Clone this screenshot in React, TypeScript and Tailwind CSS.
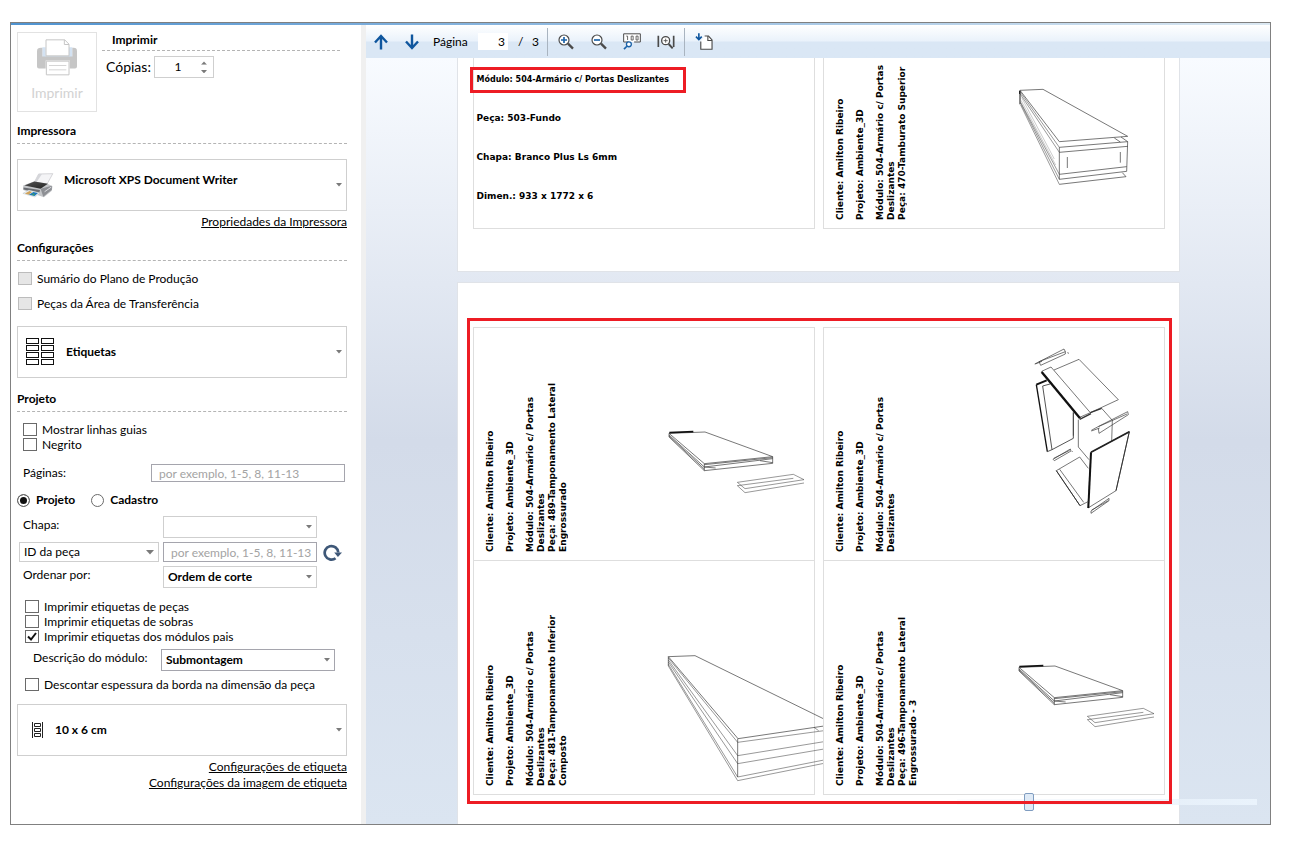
import React from "react"
import type { ReactNode } from "react"
import clsx from "clsx"

const Caret = ({ className }: { className?: string }) => (
  <svg
    viewBox="0 0 8 5"
    className={clsx("pointer-events-none shrink-0 fill-[#7a7a7a]", className)}
  >
    <path d="M0 0h8L4 4.5z" />
  </svg>
)

const SectionTitle = ({ children }: { children: ReactNode }) => (
  <h2 className="border-b border-dashed border-[#b4b4b4] pb-1 font-bold leading-4">
    {children}
  </h2>
)

type CheckProps = {
  label: string
  checked?: boolean
  disabled?: boolean
}

const Check = ({ label, checked, disabled }: CheckProps) => (
  <label className="flex h-[15px] items-center gap-[5px] whitespace-nowrap">
    <span className="relative h-[13px] w-[14px] shrink-0">
      <input
        type="checkbox"
        defaultChecked={checked}
        disabled={disabled}
        className="peer block h-[13px] w-[14px] appearance-none border border-[#6a6a6a] bg-white disabled:border-[#bcbcbc] disabled:bg-[#e6e6e6]"
      />
      <svg
        viewBox="0 0 14 13"
        className="pointer-events-none absolute inset-0 hidden peer-checked:block"
      >
        <path d="M3 6.5l3 3 5-6.5" fill="none" stroke="#111" strokeWidth="2" />
      </svg>
    </span>
    {label}
  </label>
)

type DropProps = {
  label: string
  value: string
  className?: string
  bold?: boolean
  wide?: boolean
}

const Drop = ({ label, value, className, bold, wide }: DropProps) => (
  <span className={clsx("flex items-center border bg-white pr-1", className)}>
    <select
      aria-label={label}
      className={clsx(
        "h-full min-w-0 flex-1 appearance-none bg-transparent pl-1 outline-none",
        bold && "font-bold"
      )}
    >
      <option>{value}</option>
    </select>
    <Caret className={wide ? "w-2" : "w-[6px]"} />
  </span>
)

type BigDropProps = {
  label: string
  value: string
  icon: ReactNode
  className: string
}

const BigDrop = ({ label, value, icon, className }: BigDropProps) => (
  <div className="flex h-[52px] items-center border border-[#cfcfcf] bg-white pr-1">
    {icon}
    <select
      aria-label={label}
      className={clsx(
        "h-full min-w-0 flex-1 appearance-none bg-transparent font-bold outline-none",
        className
      )}
    >
      <option>{value}</option>
    </select>
    <Caret className="w-[6px]" />
  </div>
)

const PrintIcon = () => (
  <svg viewBox="0 0 120 110" className="h-[37px] w-10">
    <path d="M16 24h10V50h70V24h10v30H16z" fill="#d3e2f2" />
    <path d="M0 36Q0 26 12 26h4v26h90V26h4q10 0 10 10v46q0 6-6 6H98V64H26v24H6q-6 0-6-6z" fill="#c6c6c6" />
    <path d="M27 2h56l13 13v35H27z" fill="#fff" stroke="#c6c6c6" strokeWidth="3" />
    <path d="M82 2v14h14" fill="none" stroke="#c6c6c6" strokeWidth="3" />
    <path d="M28 66h68v41H28z" fill="#fff" stroke="#c6c6c6" strokeWidth="3" />
    <path d="M36 79h52M36 92h52" stroke="#d5d5d5" strokeWidth="3" />
  </svg>
)

const DeviceIcon = () => (
  <svg viewBox="0 0 96 76" className="ml-1 h-[25px] w-8 shrink-0">
    <defs>
      <linearGradient id="tray" x1="0" y1="0" x2="1" y2="1">
        <stop offset="0" stopColor="#555" />
        <stop offset="1" stopColor="#222" />
      </linearGradient>
    </defs>
    <path d="M50 3l43-1-17 31-39-5z" fill="#f4f4f6" stroke="#c2c2c6" strokeWidth="2" />
    <path d="M50 3l10 0-16 24-7 1z" fill="#d5d6da" />
    <path d="M3 38l32-12 45 8 12 6-2 14-24 20-22-8L3 52z" fill="#c4c6c9" />
    <path d="M7 38l30-12 41 7-22 15z" fill="url(#tray)" />
    <path d="M56 48l34-9v12L64 72z" fill="#8d8f94" />
    <path d="M68 57l20-14" stroke="#d9dade" strokeWidth="3" />
    <path d="M4 44l50 8-2 8-48-10z" fill="#6a6d72" />
    <path d="M2 62l18-10 34 8-15 13z" fill="#eef3f8" stroke="#9aa" strokeWidth="1" />
    <path d="M8 62l14-7 8 3-10 8z" fill="#d0a35c" />
    <path d="M20 66l14-8 14 3-10 9z" fill="#1f78b8" />
    <path d="M30 62l9 2-6 5z" fill="#3fa35a" />
  </svg>
)

const LabelsIcon = () => (
  <svg viewBox="0 0 29 28" className="ml-2 h-7 w-[29px] shrink-0" fill="none" stroke="#111">
    {[0, 7, 14, 21].map((y) => (
      <g key={y}>
        <rect x="0.5" y={y + 0.5} width="12" height="5" />
        <rect x="15.5" y={y + 0.5} width="12" height="5" />
      </g>
    ))}
  </svg>
)

const RollIcon = () => (
  <svg viewBox="0 0 11 16" className="ml-[14px] h-4 w-[11px] shrink-0" fill="none" stroke="#222">
    <path d="M0.5 0v16M10.5 0v16" />
    <path d="M2.5 1.5h6v3h-6zM2.5 6.5h6v3h-6zM2.5 11.5h6v3h-6z" />
  </svg>
)

const RefreshIcon = () => (
  <svg viewBox="0 0 56 50" className="h-[17px] w-[19px]">
    <path d="M37 42A20 20 0 1 1 45 25" fill="none" stroke="#3f5878" strokeWidth="8" />
    <path d="M33 25h23L44 38z" fill="#3f5878" />
  </svg>
)

const Lens = ({ sign }: { sign: string }) => (
  <svg viewBox="0 0 48 48" className="size-4" fill="none">
    <path d="M30 29l15 15" stroke="#4a4a4a" strokeWidth="7" />
    <circle cx="18" cy="18" r="15" stroke="#4a4a4a" strokeWidth="3.5" fill="#fff" />
    <path d={sign} stroke="#1b62a8" strokeWidth="5" />
  </svg>
)

const ToolButton = ({ name, className, children }: { name: string; className?: string; children: ReactNode }) => (
  <button type="button" aria-label={name} className={clsx("shrink-0", className)}>
    {children}
  </button>
)

const Toolbar = () => (
  <div className="flex h-[33px] shrink-0 items-center bg-linear-to-b from-white via-[#eaf2fb] via-48% to-[#dae7f5] to-52% pl-2">
    <ToolButton name="Página anterior">
      <svg viewBox="0 0 14 16" className="h-4 w-[14px]" fill="none" stroke="#0f569e" strokeWidth="2.4">
        <path d="M7 15.5V2.5M1 8.5l6-6.5 6 6.5" />
      </svg>
    </ToolButton>
    <ToolButton name="Próxima página" className="ml-[17px]">
      <svg viewBox="0 0 14 16" className="h-4 w-[14px]" fill="none" stroke="#0f569e" strokeWidth="2.4">
        <path d="M7 0.5V13.5M1 7.5l6 6.500 6-6.500" />
      </svg>
    </ToolButton>
    <label className="ml-[14px] flex items-center">
      <span className="w-[45px]">Página</span>
      <input defaultValue="3" className="h-[17px] w-[30px] bg-white pr-[3px] text-right outline-none" />
    </label>
    <span className="ml-[10px] w-[14px]">/</span>
    <span className="w-[15px]">3</span>
    <span className="h-7 w-px bg-[#a9b4c0]" />
    <ToolButton name="Aumentar" className="ml-[10px]">
      <Lens sign="M9 18h18M18 9v18" />
    </ToolButton>
    <ToolButton name="Diminuir" className="ml-[17px]">
      <Lens sign="M9 18h18" />
    </ToolButton>
    <ToolButton name="Tamanho real" className="ml-4">
      <svg viewBox="0 0 55 51" className="h-[17px] w-[18px]" fill="none">
        <path d="M18 27H2V2h51v25H34" stroke="#4a4a4a" strokeWidth="3" fill="#fff" />
        <path d="M10 9h4v12M25 9h6v12h-6zM40 9h6v12h-6z" stroke="#4a4a4a" strokeWidth="2.5" />
        <circle cx="18" cy="34" r="7.5" fill="#fff" stroke="#1b62a8" strokeWidth="4" />
        <path d="M12 40L3 49" stroke="#1b62a8" strokeWidth="5" />
      </svg>
    </ToolButton>
    <ToolButton name="Ajustar à largura" className="ml-4">
      <svg viewBox="0 0 52 42" className="h-[14px] w-[18px]" fill="none" stroke="#4a4a4a">
        <path d="M3 2v34M49 2v34" strokeWidth="5" />
        <circle cx="25" cy="17" r="12" strokeWidth="4" fill="#fff" />
        <path d="M25 11v12M19 17h12" strokeWidth="2.5" />
        <path d="M34 27l12 13" strokeWidth="6" />
      </svg>
    </ToolButton>
    <span className="ml-[9px] h-7 w-px bg-[#a9b4c0]" />
    <ToolButton name="Exportar" className="ml-[10px]">
      <svg viewBox="0 0 56 52" className="h-[17px] w-[18px]" fill="none">
        <path d="M18 26v24h35V21L42 9H30" fill="#fff" stroke="#4a4a4a" strokeWidth="3.5" />
        <path d="M40 9v14h13" stroke="#4a4a4a" strokeWidth="3.5" />
        <path d="M12 0v20M3 11l9 9 9-9" stroke="#0f569e" strokeWidth="5" />
      </svg>
    </ToolButton>
  </div>
)

const Sidebar = () => (
  <aside className="flex w-[350px] shrink-0 flex-col bg-white pl-[6px] pr-[14px] pt-[7px]">
    <div className="flex">
      <button
        type="button"
        disabled
        className="flex size-20 flex-col items-center gap-1 border border-[#e2e2e2] pt-[6px] text-sm leading-[26px] text-[#d2d2d2]"
      >
        <PrintIcon />
        Imprimir
      </button>
      <div className="ml-[5px] mr-[7px] flex-1">
        <h2 className="border-b border-dashed border-[#b4b4b4] pb-[2px] pl-[10px] font-bold leading-4">
          Imprimir
        </h2>
        <label className="mt-[5px] flex h-[22px] items-center pl-1 text-sm">
          <span className="w-12">Cópias:</span>
          <span className="flex h-full w-[60px] items-center border border-[#cfcfcf]">
            <input defaultValue="1" className="w-[46px] text-center text-xs outline-none" />
            <span className="flex flex-col gap-[5px]">
              <button type="button" aria-label="Mais cópias">
                <Caret className="w-[6px] rotate-180" />
              </button>
              <button type="button" aria-label="Menos cópias">
                <Caret className="w-[6px]" />
              </button>
            </span>
          </span>
        </label>
      </div>
    </div>

    <div className="mt-[11px]">
      <SectionTitle>Impressora</SectionTitle>
    </div>
    <div className="mt-[15px]">
      <BigDrop
        label="Impressora"
        value="Microsoft XPS Document Writer"
        icon={<DeviceIcon />}
        className="pb-[10px] pl-[10px]"
      />
    </div>
    <a href="#propriedades" className="mt-[3px] self-end leading-4 underline">
      Propriedades da Impressora
    </a>

    <div className="mt-[10px]">
      <SectionTitle>Configurações</SectionTitle>
    </div>
    <div className="mt-[10px] flex flex-col gap-[10px] pl-px">
      <Check label="Sumário do Plano de Produção" disabled />
      <Check label="Peças da Área de Transferência" disabled />
    </div>
    <div className="mt-[15px]">
      <BigDrop label="Tipo" value="Etiquetas" icon={<LabelsIcon />} className="pl-[11px]" />
    </div>

    <div className="mt-[13px]">
      <SectionTitle>Projeto</SectionTitle>
    </div>
    <div className="mt-[10px] flex flex-col pl-[6px]">
      <Check label="Mostrar linhas guias" />
      <Check label="Negrito" />
    </div>
    <label className="mt-3 flex h-[18px] items-center justify-between pl-[6px] pr-[2px]">
      Páginas:
      <input
        placeholder="por exemplo, 1-5, 8, 11-13"
        className="h-[18px] w-[194px] border border-[#a5a5ad] pl-[7px] outline-none placeholder:text-[#a3a3a3]"
      />
    </label>
    <div className="mt-[10px] flex h-4 items-center gap-4 font-bold">
      {["Projeto", "Cadastro"].map((name) => (
        <label key={name} className="flex items-center gap-[6px]">
          <input
            type="radio"
            name="origem"
            defaultChecked={name === "Projeto"}
            className="size-[13px] appearance-none rounded-full border border-[#6a6a6a] bg-white checked:bg-[#111] checked:shadow-[inset_0_0_0_2px_white]"
          />
          {name}
        </label>
      ))}
    </div>

    <div className="mt-2 grid grid-cols-[142px_154px_auto] gap-x-1 gap-y-1">
      <span className="h-[22px] pl-[6px] leading-[18px]">Chapa:</span>
      <Drop label="Chapa" value="" className="h-[22px] border-[#cfcfcf]" />
      <span />
      <Drop label="Campo" value="ID da peça" wide className="ml-[2px] h-5 border-[#cfcfcf]" />
      <input
        aria-label="ID da peça"
        placeholder="por exemplo, 1-5, 8, 11-13"
        className="h-5 w-full min-w-0 border border-[#a5a5ad] pl-[7px] outline-none placeholder:text-[#a3a3a3]"
      />
      <button type="button" aria-label="Atualizar" className="ml-[2px] self-center">
        <RefreshIcon />
      </button>
      <span className="h-[22px] pl-[6px] leading-[18px]">Ordenar por:</span>
      <Drop label="Ordenar por" value="Ordem de corte" bold className="h-[22px] border-[#cfcfcf]" />
    </div>

    <div className="mt-[11px] flex flex-col pl-2">
      <Check label="Imprimir etiquetas de peças" />
      <Check label="Imprimir etiquetas de sobras" />
      <Check label="Imprimir etiquetas dos módulos pais" checked />
    </div>
    <div className="mt-[5px] flex justify-between pl-4 pr-3">
      <span className="leading-[18px]">Descrição do módulo:</span>
      <Drop label="Descrição do módulo" value="Submontagem" bold className="h-[22px] w-[174px] border-[#a5a5ad]" />
    </div>
    <div className="mt-[6px] pl-2">
      <Check label="Descontar espessura da borda na dimensão da peça" />
    </div>
    <div className="mt-3">
      <BigDrop label="Tamanho" value="10 x 6 cm" icon={<RollIcon />} className="pl-3" />
    </div>
    <a href="#etiqueta" className="mt-[3px] self-end leading-4 underline">
      Configurações de etiqueta
    </a>
    <a href="#imagem" className="self-end leading-4 underline">
      Configurações da imagem de etiqueta
    </a>
  </aside>
)

const Drawing = ({ box, children }: { box: string; children: ReactNode }) => (
  <svg
    viewBox={box}
    className="pointer-events-none absolute inset-0 size-full overflow-visible"
    fill="none"
    stroke="#333"
    strokeWidth="2"
  >
    {children}
  </svg>
)

const Panel = () => (
  <>
    <path d="M627 370L735 366L938 440L733 461Z" />
    <path d="M628 368L700 365" stroke="#111" strokeWidth="5" />
    <path d="M627 370v11L733 482L938 460V440M733 461v21M627 375L733 471L938 446M733 464L938 443" />
    <path d="M627 378L733 477M733 471l34 3M900 452l38 6" />
    <path d="M832 517L1000 493L1032 509L855 536ZM832 527L855 548L1032 519M832 527L1000 505" strokeWidth="1.5" />
  </>
)

const Stack = () => (
  <>
    <path d="M1092 507L705 317L625 320L834 566L1092 528" />
    <path d="M625 320v28M833 566v115" />
    <path d="M625 324L833 577L1092 542M625 330L833 617L1092 575M625 336L833 641L1092 597M625 343L833 681L1092 630M625 348L833 692L1092 640M1062 532l14 10" strokeWidth="1.5" />
  </>
)

const Beam = () => (
  <>
    <path d="M615 226L684 223L938 364L733 380Z" />
    <path d="M615 228v40M614 227v10" stroke="#111" strokeWidth="3" />
    <path d="M733 397L938 380L918 366M733 412L938 394M733 478L935 455M733 493L935 469M733 508L933 485L922 473M733 397v96M938 380l-3 89M898 369l18 12M757 426v33M916 411v32" />
    <path d="M615 230L733 397M615 236L733 412M617 262L733 478M617 265L733 493M617 270L733 508" strokeWidth="1.5" />
    <path d="M620 248L718 432M618 256L722 450" stroke="#999" strokeWidth="1.5" />
  </>
)

const Cabinet = () => (
  <>
    <path d="M659 147l16-8 72-37 4 8M672 140l79-30v7l-74 34zM661 147l20-8M757 113l5 2" />
    <path d="M680 169l28-13 118 137-32 14z" fill="#fff" />
    <path d="M717 165l75-32 118 121-84 39" />
    <path d="M680 171L795 310" stroke="#111" strokeWidth="7" />
    <path d="M794 313l34-17M826 293l34-13" strokeWidth="4" />
    <path d="M664 209L697 410" stroke="#111" strokeWidth="4" />
    <path d="M664 209l31-13" stroke="#111" strokeWidth="6" />
    <path d="M683 213L711 404L775 370V292M697 410l14-6M683 213l22-6" strokeWidth="2.5" />
    <path d="M790 314v82l32 38M860 280l32 36-2 64M775 292v70" />
    <path d="M829 346l22-12 87-44 2 9-88 56-2-15M829 348l25-9M850 335l86-38" />
    <path d="M828 412L943 350L903 527L819 579Z" />
    <path d="M828 412L820 579" stroke="#111" strokeWidth="6" />
    <path d="M828 412L943 350" stroke="#222" strokeWidth="5" />
    <path d="M943 350L903 527" strokeWidth="3" />
    <path d="M714 433l52-31 2 6-50 29zM716 430l48-24M771 408l1 3" />
    <path d="M724 467l70-41 26 34M724 467l71 105 26-13M734 463l72 99" />
    <path d="M724 467l71 105" strokeWidth="3" />
    <path d="M828 588l54-38v7l-54 38zM830 585l50-28" />
  </>
)

type TagProps = {
  lines: string[][]
  box: string
  drawing: ReactNode
  className: string
}

// Rotated label: the text reads from the bottom up
const Tag = ({ lines, box, drawing, className }: TagProps) => (
  <div className={clsx("relative flex items-end border-[#dedede] bg-white pb-2 pl-[11px]", className)}>
    <div className="flex rotate-180 flex-col whitespace-nowrap text-[9px] font-bold leading-[11px] [writing-mode:vertical-rl]">
      {lines.map((group) => (
        <p key={group[0]} className="ml-[9px] last:ml-0">
          {group.map((line) => (
            <span key={line} className="block">
              {line}
            </span>
          ))}
        </p>
      ))}
    </div>
    <Drawing box={box}>{drawing}</Drawing>
  </div>
)

const tagLines = (...part: string[]) => [
  ["Cliente: Amilton Ribeiro"],
  ["Projeto: Ambiente_3D"],
  ["Módulo: 504-Armário c/ Portas", "Deslizantes", ...part],
]

const Preview = () => (
  <main className="relative min-h-0 flex-1 overflow-hidden bg-linear-to-b from-[#f8fbff] via-[#d3dbe9] via-50% to-[#dbe5f1]">
    <div className="mx-auto w-full max-w-[723px] font-['DejaVu_Sans',Verdana,sans-serif] text-black">
      <section className="grid grid-cols-2 gap-x-2 border-x border-b border-[#e0e3e8] bg-white pb-[42px] pl-[15px] pr-[14px]">
        <div className="border-x border-b border-[#dedede] pl-[3px] text-[9px] font-bold leading-[11px]">
          <p className="-ml-[7px] mt-[9px] w-[216px] border-[3px] border-[#ed1c24] py-[5px] pl-[4px] text-[8px] leading-[10px]">
            Módulo: 504-Armário c/ Portas Deslizantes
          </p>
          <p className="mt-5">Peça: 503-Fundo</p>
          <p className="mt-7">Chapa: Branco Plus Ls 6mm</p>
          <p className="mt-7">Dimen.: 933 x 1772 x 6</p>
        </div>
        <Tag
          lines={tagLines("Peça: 470-Tamburato Superior")}
          box="27 129 1020 510"
          drawing={<Beam />}
          className="h-[171px] border-x border-b"
        />
      </section>

      <section className="mt-[10px] border border-[#e0e3e8] bg-white pb-20 pl-[15px] pr-[14px] pt-11">
        <div className="relative grid grid-cols-2 gap-x-2">
          <Tag
            lines={tagLines("Peça: 489-Tamponamento Lateral", "Engrossurado")}
            box="42 54 1020 696"
            drawing={<Panel />}
            className="h-[234px] border"
          />
          <Tag lines={tagLines()} box="27 39 1020 696" drawing={<Cabinet />} className="h-[234px] border" />
          <Tag
            lines={tagLines("Peça: 481-Tamponamento Inferior", "Composto")}
            box="42 33 1020 699"
            drawing={<Stack />}
            className="h-[234px] border-x border-b"
          />
          <Tag
            lines={tagLines("Peça: 496-Tamponamento Lateral", "Engrossurado - 3")}
            box="42 51 1020 699"
            drawing={<Panel />}
            className="h-[234px] border-x border-b"
          />
          <div className="pointer-events-none absolute -bottom-[9px] -left-[6px] -right-[7px] -top-[9px] z-20 border-[3px] border-[#ed1c24]" />
        </div>
      </section>
    </div>
    <input
      type="range"
      aria-label="Zoom"
      min={0}
      max={100}
      defaultValue={23}
      className="absolute bottom-[13px] right-[13px] z-10 h-[18px] w-[300px] appearance-none bg-transparent [&::-webkit-slider-runnable-track]:h-[6px] [&::-webkit-slider-runnable-track]:bg-linear-to-r [&::-webkit-slider-runnable-track]:from-[#e9f0f9]/20 [&::-webkit-slider-runnable-track]:to-[#eaf3fc] [&::-webkit-slider-thumb]:-mt-[6px] [&::-webkit-slider-thumb]:h-[18px] [&::-webkit-slider-thumb]:w-[10px] [&::-webkit-slider-thumb]:appearance-none [&::-webkit-slider-thumb]:rounded-xs [&::-webkit-slider-thumb]:border [&::-webkit-slider-thumb]:border-[#7f9cc0] [&::-webkit-slider-thumb]:bg-[#dfeaf6]"
    />
  </main>
)

export default function App() {
  return (
    <div className="flex h-screen min-h-[842px] bg-white pb-[17px] pl-[10px] pr-5 pt-[22px] font-[Lato,'Open_Sans',sans-serif] text-xs text-black">
      <div className="flex min-w-0 flex-1 flex-col border border-[#808080]">
        <div className="h-[2px] shrink-0 bg-linear-to-r from-[#4f93d0] to-[#dbe8f2]" />
        <div className="flex min-h-0 flex-1">
          <Sidebar />
          <div className="w-[5px] shrink-0 bg-[#f0f0f0]" />
          <div className="flex min-w-0 flex-1 flex-col">
            <Toolbar />
            <Preview />
          </div>
        </div>
      </div>
    </div>
  )
}
